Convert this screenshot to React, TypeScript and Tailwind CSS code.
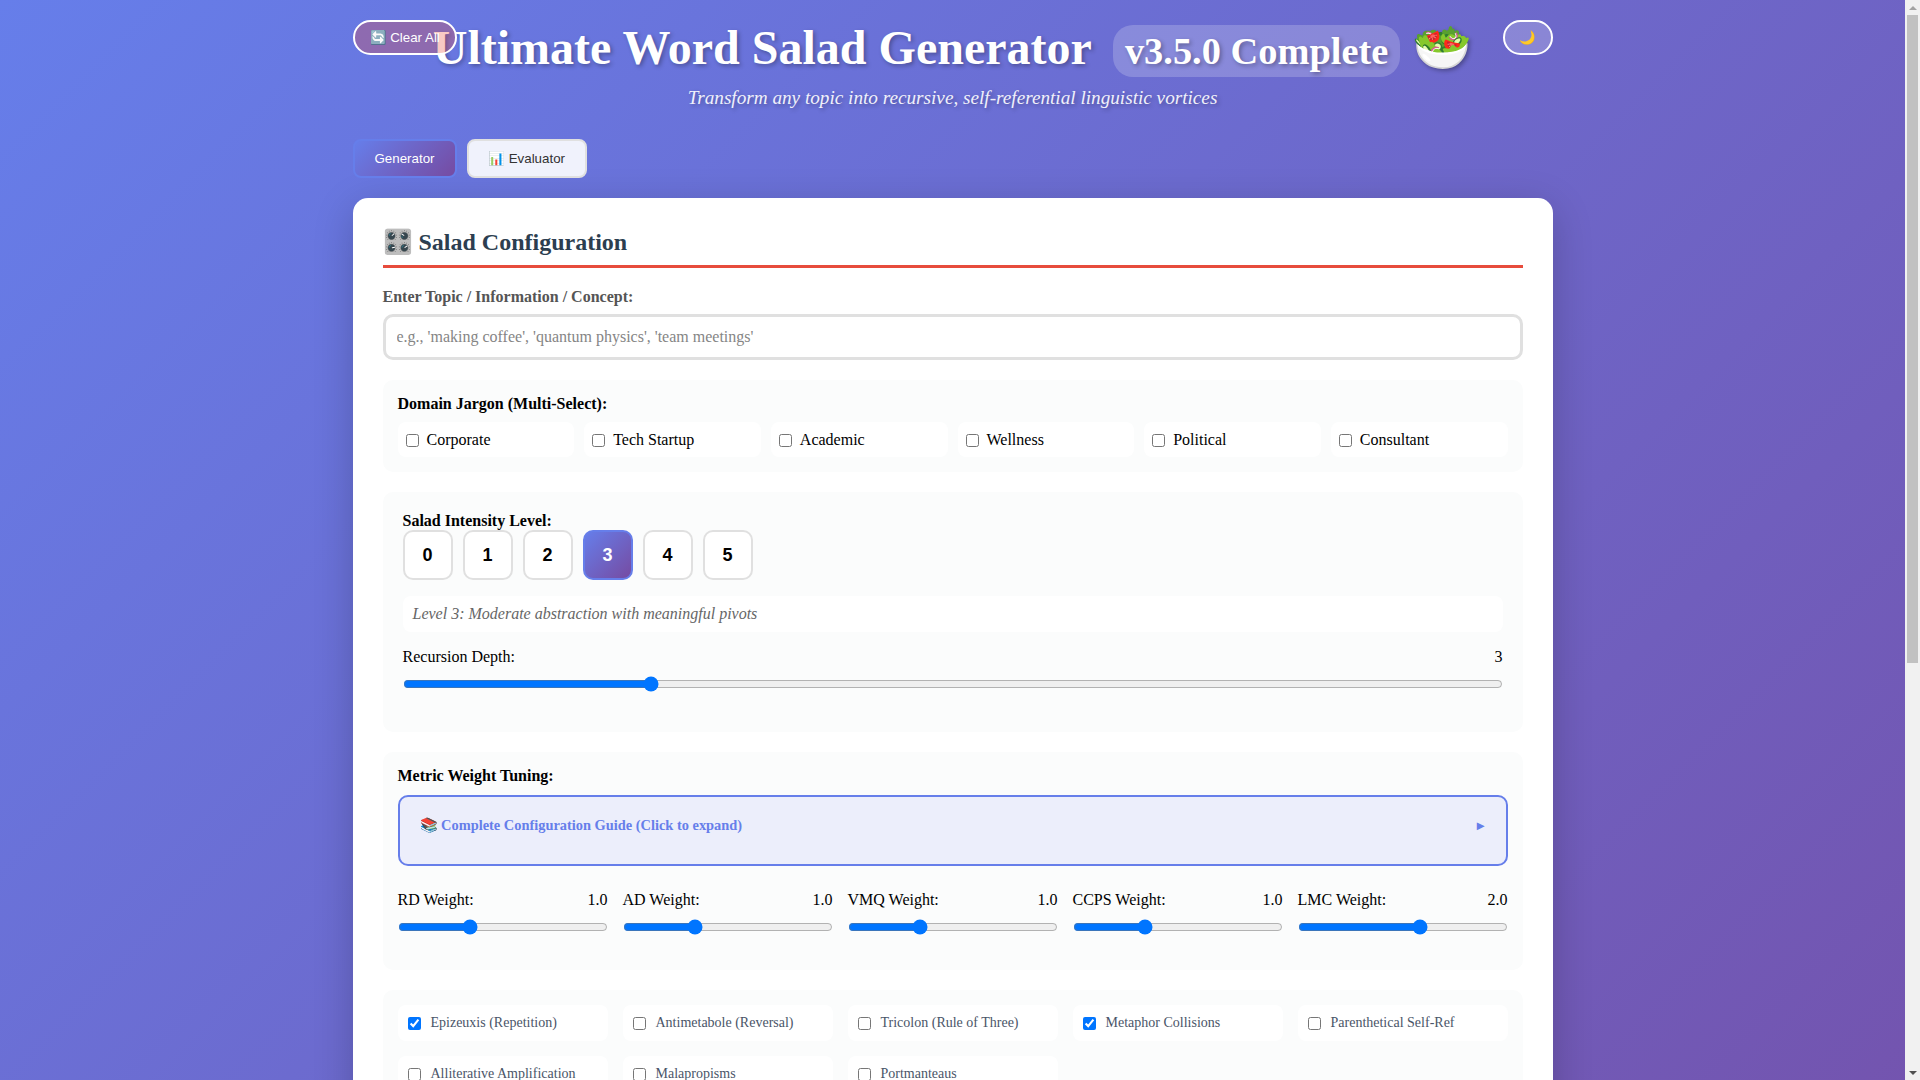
const domains = ["Corporate", "Tech Startup", "Academic", "Wellness", "Political", "Consultant"];
const levels = [0, 1, 2, 3, 4, 5];
const weights = [
  { name: "RD", value: 1, max: 3 },
  { name: "AD", value: 1, max: 3 },
  { name: "VMQ", value: 1, max: 3 },
  { name: "CCPS", value: 1, max: 3 },
  { name: "LMC", value: 2, max: 3.4 },
];
const devices = [
  { label: "Epizeuxis (Repetition)", on: true },
  { label: "Antimetabole (Reversal)", on: false },
  { label: "Tricolon (Rule of Three)", on: false },
  { label: "Metaphor Collisions", on: true },
  { label: "Parenthetical Self-Ref", on: false },
  { label: "Alliterative Amplification", on: false },
  { label: "Malapropisms", on: false },
  { label: "Portmanteaus", on: false },
];

export default function App() {
  return (
    <div className="flex h-screen font-['Liberation_Serif',serif] text-base">
      <div className="flex-1 overflow-y-auto [scrollbar-width:none]">
        <div className="bg-[linear-gradient(135deg,#667eea_0%,#764ba2_100%)] pb-5">
          <div className="mx-auto w-[1200px]">
            {/* Header */}
            <header className="relative pt-5 text-center text-white [text-shadow:2px_2px_4px_rgba(0,0,0,0.3)]">
              <h1 className="text-[48px] leading-[55px] font-bold">
                Ultimate Word Salad Generator{" "}
                <span className="ml-2.5 inline-block rounded-[20px] bg-white/20 px-3 py-1 text-[38.4px] leading-[44px]">v3.5.0 Complete</span>{" "}
                🥗
              </h1>
              <p className="mt-2.5 text-[19.2px] leading-[22px] italic opacity-90">Transform any topic into recursive, self-referential linguistic vortices</p>
              <button className="absolute top-5 left-0 h-[35px] rounded-[20px] border-2 border-white bg-[rgba(231,76,60,0.3)] px-[15px] font-['Liberation_Sans',sans-serif] text-[13.33px] text-white [text-shadow:none]">🔄 Clear All</button>
              <button className="absolute top-5 right-0 h-[35px] w-[50px] rounded-[20px] border-2 border-white bg-white/20 font-['Liberation_Sans',sans-serif] text-[13.33px] [text-shadow:none]">🌙</button>
            </header>

            {/* Tabs */}
            <div className="mt-[30px] flex gap-2.5">
              <button className="h-[39px] w-[104px] rounded-lg border-2 border-[#667eea] bg-[linear-gradient(135deg,#667eea_0%,#764ba2_100%)] font-['Liberation_Sans',sans-serif] text-[13.33px] text-white">Generator</button>
              <button className="h-[39px] w-[120px] rounded-lg border-2 border-[#e0e0e0] bg-[#f0f2fc] font-['Liberation_Sans',sans-serif] text-[13.33px] text-[#333]">📊 Evaluator</button>
            </div>

            {/* Config card */}
            <div className="mt-5 min-h-[1532px] rounded-[15px] bg-white p-[30px] shadow-[0_10px_40px_rgba(0,0,0,0.2)]">
              <h2 className="border-b-[3px] border-[#e74c3c] pb-[9px] text-2xl leading-[28px] font-bold text-[#2c3e50]">🎛️ Salad Configuration</h2>

              <label className="mt-5 block leading-[18px] font-bold text-[#555]">Enter Topic / Information / Concept:</label>
              <input
                type="text"
                placeholder="e.g., 'making coffee', 'quantum physics', 'team meetings'"
                className="mt-2 block h-[46px] w-full rounded-[10px] border-[3px] border-[#e0e0e0] px-[11px] text-base placeholder:text-[#858585]"
              />

              {/* Domain jargon */}
              <section className="mt-5 rounded-[10px] bg-[#fbfcfc] p-[15px]">
                <h3 className="leading-[18px] font-bold text-black">Domain Jargon (Multi-Select):</h3>
                <div className="mt-[9px] grid grid-cols-6 gap-2.5">
                  {domains.map((d) => (
                    <label key={d} className="flex h-[35px] items-center gap-2 rounded-lg bg-white px-2 text-black">
                      <input type="checkbox" className="mt-0.5" />
                      {d}
                    </label>
                  ))}
                </div>
              </section>

              {/* Intensity */}
              <section className="mt-5 rounded-[10px] bg-[#fbfcfc] p-5">
                <h3 className="leading-[18px] font-bold text-black">Salad Intensity Level:</h3>
                <div className="flex gap-2.5">
                  {levels.map((l) => (
                    <button
                      key={l}
                      className={
                        l === 3
                          ? "h-[50px] w-[50px] rounded-[10px] border-2 border-[#667eea] bg-[linear-gradient(135deg,#667eea_0%,#764ba2_100%)] font-['Liberation_Sans',sans-serif] text-lg font-bold text-white"
                          : "h-[50px] w-[50px] rounded-[10px] border-2 border-[#e0e0e0] bg-white font-['Liberation_Sans',sans-serif] text-lg font-bold text-black"
                      }
                    >
                      {l}
                    </button>
                  ))}
                </div>
                <div className="mt-4 rounded-lg bg-white px-2.5 py-[9px] leading-[18px] text-[#666] italic">Level 3: Moderate abstraction with meaningful pivots</div>
                <div className="mt-4 flex justify-between leading-[18px] text-black">
                  <span>Recursion Depth:</span>
                  <span>3</span>
                </div>
                <input type="range" min={1} max={10} defaultValue={3} className="mt-3.5 mb-6 block h-2 w-full" />
              </section>

              {/* Metric weights */}
              <section className="mt-5 rounded-[10px] bg-[#fbfcfc] p-[15px]">
                <h3 className="leading-[18px] font-bold text-black">Metric Weight Tuning:</h3>
                <div className="mt-2.5 flex h-[71px] justify-between rounded-[10px] border-2 border-[#667eea] bg-[#eceefb] pt-5 pr-[22px] pl-5 text-[14.4px] leading-[17px] font-bold text-[#667eea]">
                  <span>📚 Complete Configuration Guide (Click to expand)</span>
                  <span>▸</span>
                </div>
                <div className="mt-[25px] grid grid-cols-5 gap-[15px]">
                  {weights.map((w) => (
                    <div key={w.name}>
                      <div className="flex justify-between leading-[18px] text-black">
                        <span>{w.name} Weight:</span>
                        <span>{w.value.toFixed(1)}</span>
                      </div>
                      <input type="range" min={0} max={w.max} step={0.1} defaultValue={w.value} className="mt-3.5 block h-2 w-full" />
                    </div>
                  ))}
                </div>
                <div className="h-6" />
              </section>

              {/* Rhetorical devices */}
              <section className="mt-5 rounded-[10px] bg-[#fbfcfc] p-[15px]">
                <div className="grid grid-cols-5 gap-[15px]">
                  {devices.map((d) => (
                    <label key={d.label} className="flex h-[36px] items-center gap-2.5 rounded-lg bg-white px-2.5 text-sm text-[#4a5568]">
                      <input type="checkbox" defaultChecked={d.on} />
                      {d.label}
                    </label>
                  ))}
                </div>
              </section>
            </div>
          </div>
        </div>
      </div>

      {/* Scrollbar */}
      <div className="flex w-[15px] flex-col items-center bg-[#f1f1f1]">
        <div className="flex h-[15px] items-center justify-center">
          <svg width="8" height="4" viewBox="0 0 8 4"><path d="M4 0 8 4H0Z" fill="#a3a3a3" /></svg>
        </div>
        <div className="flex-1">
          <div className="h-[648px] w-[11px] bg-[#c1c1c1]" />
        </div>
        <div className="flex h-[15px] items-center justify-center">
          <svg width="8" height="4" viewBox="0 0 8 4"><path d="M0 0H8L4 4Z" fill="#505050" /></svg>
        </div>
      </div>
    </div>
  );
}
